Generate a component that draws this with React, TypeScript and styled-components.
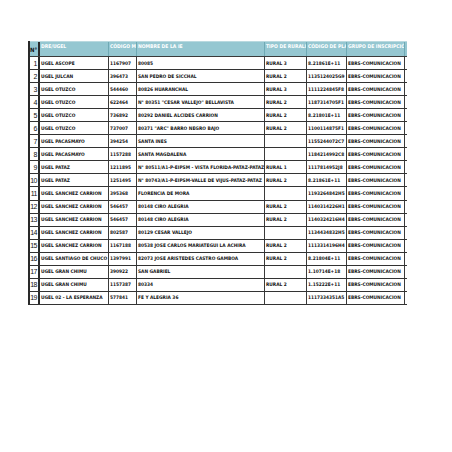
import React from 'react'
import styled, { createGlobalStyle } from 'styled-components'

const GlobalStyle = createGlobalStyle`
  html, body {
    margin: 0;
    padding: 0;
    background: #ffffff;
  }
`

const COLUMNS = '10px 69px 28px 128px 42px 40px 58px'

const Page = styled.div`
  width: 452px;
  height: 452px;
  padding: 41px 0 0 28px;
  box-sizing: border-box;
  font-family: 'Liberation Sans Narrow', 'DejaVu Sans Condensed', 'Liberation Sans', sans-serif;
`

const Sheet = styled.div`
  display: flex;
  flex-direction: column;
  width: 377px;
  border-left: 2px solid #2a2a2a;
`

const HeaderRow = styled.div`
  display: grid;
  grid-template-columns: ${COLUMNS};
  height: 16px;
  box-sizing: border-box;
  background: #95c7d1;
  border-top: 1px solid #b9d9df;
  border-bottom: 1px solid #3a3a3a;
`

const HeaderCell = styled.div`
  box-sizing: border-box;
  overflow: hidden;
  white-space: nowrap;
  padding: 1px 0 0 1px;
  color: #ffffff;
  font-size: 5px;
  font-weight: 700;
  line-height: 6px;
  border-right: 1px solid #6fa9b4;
`

const NumberLabel = styled.div`
  box-sizing: border-box;
  border-right: 2px solid #2a2a2a;
  display: flex;
  align-items: flex-end;
  padding-bottom: 3px;
  color: #111;
  font-size: 6px;
  font-weight: 700;
`

const Row = styled.div`
  display: grid;
  grid-template-columns: ${COLUMNS};
  height: 13.05px;
  box-sizing: border-box;
  border-bottom: 1px solid #333333;
`

const Cell = styled.div<{ $align?: 'left' | 'right'; $thick?: boolean }>`
  box-sizing: border-box;
  overflow: hidden;
  white-space: nowrap;
  display: flex;
  align-items: center;
  justify-content: ${p => (p.$align === 'right' ? 'flex-end' : 'flex-start')};
  padding: 0 1px;
  border-right: ${p => (p.$thick ? '2px solid #2a2a2a' : '1px solid #3a3a3a')};
  color: #111111;
  font-size: 4.8px;
  font-weight: 700;
`

const Index = styled.span`
  font-size: 7px;
  font-weight: 400;
  font-family: 'Liberation Sans', sans-serif;
  letter-spacing: -0.5px;
`

type Item = [string, string, string, string, string]

const rows: Item[] = [
  ['UGEL ASCOPE', '1167907', '80085', 'RURAL 3', '8.21861E+11'],
  ['UGEL JULCAN', '396473', 'SAN PEDRO DE SICCHAL', 'RURAL 2', '1135124025G9'],
  ['UGEL OTUZCO', '544460', '80826 HUARANCHAL', 'RURAL 3', '1111224845F8'],
  ['UGEL OTUZCO', '622464', 'N° 80351 "CESAR VALLEJO" BELLAVISTA', 'RURAL 2', '1187314705F1'],
  ['UGEL OTUZCO', '736892', '80292 DANIEL ALCIDES CARRION', 'RURAL 2', '8.21801E+11'],
  ['UGEL OTUZCO', '737007', '80371 "ARC" BARRO NEGRO BAJO', 'RURAL 2', '1100114875F1'],
  ['UGEL PACASMAYO', '394254', 'SANTA INES', '', '1155244072C7'],
  ['UGEL PACASMAYO', '1157288', 'SANTA MAGDALENA', '', '1184214992C8'],
  ['UGEL PATAZ', '1211895', 'N° 80511/A1-P-EIPSM - VISTA FLORIDA-PATAZ-PATAZ', 'RURAL 1', '1117814952J8'],
  ['UGEL PATAZ', '1251495', 'N° 80743/A1-P-EIPSM-VALLE DE VIJUS-PATAZ-PATAZ', 'RURAL 2', '8.21861E+11'],
  ['UGEL SANCHEZ CARRION', '395368', 'FLORENCIA DE MORA', '', '1193264842H5'],
  ['UGEL SANCHEZ CARRION', '546457', '80148 CIRO ALEGRIA', 'RURAL 2', '1140314226H1'],
  ['UGEL SANCHEZ CARRION', '546457', '80148 CIRO ALEGRIA', 'RURAL 2', '1140324216H4'],
  ['UGEL SANCHEZ CARRION', '802587', '80129 CESAR VALLEJO', '', '1134434832H5'],
  ['UGEL SANCHEZ CARRION', '1167188', '80538 JOSE CARLOS MARIATEGUI  LA ACHIRA', 'RURAL 2', '1113314196H4'],
  ['UGEL SANTIAGO DE CHUCO', '1397991', '82073 JOSE ARISTEDES CASTRO GAMBOA', 'RURAL 2', '8.21804E+11'],
  ['UGEL GRAN CHIMU', '390922', 'SAN GABRIEL', '', '1.10714E+18'],
  ['UGEL GRAN CHIMU', '1157387', '80334', 'RURAL 2', '1.15222E+11'],
  ['UGEL 02 - LA ESPERANZA', '577841', 'FE Y ALEGRIA 36', '', '1117334351A5'],
]

const headers = ['DRE/UGEL', 'CÓDIGO MODULAR', 'NOMBRE DE LA IE', 'TIPO DE RURALIDAD', 'CÓDIGO DE PLAZA', 'GRUPO DE INSCRIPCIÓN']

const App = () => {
  return (
    <>
      <GlobalStyle />
      <Page>
        <Sheet>
          <HeaderRow>
            <NumberLabel>N°</NumberLabel>
            {headers.map(h => (
              <HeaderCell key={h}>{h}</HeaderCell>
            ))}
          </HeaderRow>
          {rows.map((r, i) => (
            <Row key={i}>
              <Cell $align="right" $thick>
                <Index>{i + 1}</Index>
              </Cell>
              <Cell>{r[0]}</Cell>
              <Cell>{r[1]}</Cell>
              <Cell>{r[2]}</Cell>
              <Cell>{r[3]}</Cell>
              <Cell>{r[4]}</Cell>
              <Cell>EBRS-COMUNICACION</Cell>
            </Row>
          ))}
        </Sheet>
      </Page>
    </>
  )
}

export default App
